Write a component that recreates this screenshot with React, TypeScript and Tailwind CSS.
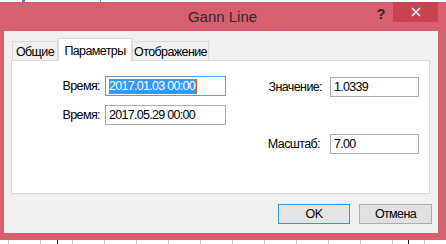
import React from "react";

const ticks = [8, 40, 72, 104, 136, 168, 200, 232, 264, 296, 328, 360, 392, 424];

function Field({ value, w, focused }: { value: string; w: string; focused?: boolean }) {
  return (
    <div
      className={`h-[20px] ${w} bg-white border flex items-center pl-[3px] text-[12.5px] tracking-[-0.7px] leading-none text-black ${
        focused ? "border-[#569de5]" : "border-[#abadb3]"
      }`}
    >
      {focused ? (
        <span className="flex items-center h-[15px]">
          <span className="bg-[#3399ff] text-white h-[15px] flex items-center pr-[1px]">{value}</span>
          <span className="w-[1px] h-[15px] bg-[#cc6a1a]" />
        </span>
      ) : (
        <span>{value}</span>
      )}
    </div>
  );
}

export default function App() {
  return (
    <div
      className="w-[446px] h-[244px] bg-white overflow-hidden flex flex-col"
      style={{ fontFamily: '"Liberation Sans", Arial, sans-serif' }}
    >
      <svg className="block shrink-0" width="446" height="2">
        <rect x="22" y="0" width="3" height="2" fill="#2b8ad8" />
        <rect x="100" y="0" width="1" height="2" fill="#6aaee6" />
      </svg>
      <div className="h-[238px] bg-[#d75f6e] pl-[4px] pr-[8px] flex flex-col shrink-0">
        {/* title bar */}
        <div className="h-[29px] flex items-start">
          <div className="flex-1 h-full flex items-center justify-center text-[15px] text-[#2b2b2b] pl-[70px] pt-[1px]">
            Gann Line
          </div>
          <div className="w-[20px] h-[22px] flex items-center justify-center text-[14px] font-bold text-[#2a2a2a] mr-[2px] pt-[2px]">
            ?
          </div>
          <div className="w-[45px] h-[20px] bg-[#c7434f] flex items-center justify-center">
            <svg width="10" height="10" viewBox="0 0 10 10">
              <path d="M1 1 L9 9 M9 1 L1 9" stroke="white" strokeWidth="1.6" />
            </svg>
          </div>
        </div>
        {/* client */}
        <div className="h-[202px] bg-[#f0f0f0] flex flex-col px-[7px] pt-[7px] text-[12.5px] tracking-[-0.6px] text-black">
          {/* tabs */}
          <div className="h-[22px] flex items-end pl-[1px] relative z-10">
            <div className="h-[19px] w-[46px] border border-b-0 border-[#d9d9d9] bg-[#f0f0f0] flex items-center justify-center pt-[2px]">
              Общие
            </div>
            <div className="h-[23px] w-[74px] border border-b-0 border-[#d9d9d9] bg-white flex items-start justify-center pt-[3px] -mb-[1px]">
              Параметры
            </div>
            <div className="h-[19px] w-[77px] border border-b-0 border-[#d9d9d9] bg-[#f0f0f0] flex items-center justify-center pt-[2px]">
              Отображение
            </div>
          </div>
          {/* panel */}
          <div className="h-[134px] w-[419px] bg-white border border-[#d9d9d9] flex pt-[15px] pr-[10px]">
            <div className="flex flex-col gap-[9px]">
              <div className="flex items-center">
                <div className="w-[88px] text-right">Время:</div>
                <div className="w-[5px]" />
                <Field value="2017.01.03 00:00" w="w-[121px]" focused />
              </div>
              <div className="flex items-center">
                <div className="w-[88px] text-right">Время:</div>
                <div className="w-[5px]" />
                <Field value="2017.05.29 00:00" w="w-[121px]" />
              </div>
            </div>
            <div className="ml-auto flex flex-col pt-[1px] gap-[37px]">
              <div className="flex items-center justify-end">
                <div className="text-right">Значение:</div>
                <div className="w-[8px]" />
                <Field value="1.0339" w="w-[89px]" />
              </div>
              <div className="flex items-center justify-end">
                <div className="text-right">Масштаб:</div>
                <div className="w-[10px]" />
                <Field value="7.00" w="w-[89px]" />
              </div>
            </div>
          </div>
          {/* buttons */}
          <div className="flex justify-end gap-[9px] mt-[10px] -mr-[1px]">
            <button className="w-[72px] h-[20px] border border-[#3c8fe6] bg-[#e5e5e5] flex items-center justify-center">
              OK
            </button>
            <button className="w-[73px] h-[20px] border border-[#adadad] bg-[#e1e1e1] flex items-center justify-center">
              Отмена
            </button>
          </div>
        </div>
      </div>
      <svg className="block shrink-0" width="446" height="4">
        {ticks.map((x) => (
          <rect key={x} x={x} y="0" width="1" height="4" fill="#c8c8c8" />
        ))}
        <rect x="57" y="0" width="1" height="4" fill="#111" />
        <rect x="408" y="0" width="1" height="4" fill="#111" />
      </svg>
    </div>
  );
}
